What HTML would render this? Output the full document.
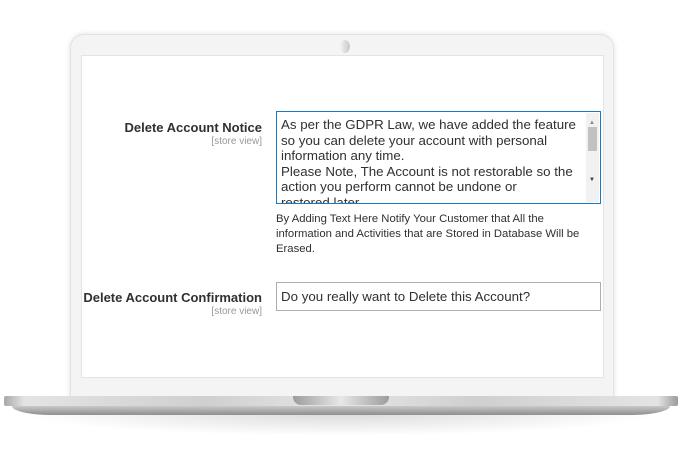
<!DOCTYPE html>
<html><head><style>
*{margin:0;padding:0;box-sizing:border-box}
body{width:680px;height:450px;background:#fff;position:relative;overflow:hidden;font-family:"Liberation Sans",sans-serif;color:#303030}
.lid{position:absolute;left:70px;top:34px;width:544px;height:366px;background:#f4f4f4;border-radius:14px 14px 0 0;box-shadow:0 0 6px rgba(0,0,0,.12);border:1px solid #e2e2e2}
.cam{position:absolute;left:340px;top:40px;width:10px;height:13px;border-radius:50%;background:linear-gradient(90deg,#f2f2f2,#c8c8c8)}
.screen{position:absolute;left:81px;top:55px;width:523px;height:323px;background:#fff;border:1px solid #e4e4e4}
.base{position:absolute;left:4px;top:396px;width:674px;height:10px;background:linear-gradient(90deg,#a8a8a8,#e4e4e4 3%,#cfcfcf 30%,#e6e6e6 50%,#cfcfcf 70%,#e4e4e4 97%,#9a9a9a);border-radius:2px}
.base2{position:absolute;left:12px;top:406px;width:658px;height:9px;background:linear-gradient(#c9c9c9,#8e8e8e);border-radius:0 0 40px 40px/0 0 9px 9px}
.shadow{position:absolute;left:20px;top:414px;width:640px;height:22px;background:radial-gradient(ellipse at 50% 0,rgba(0,0,0,.14),rgba(0,0,0,0) 70%)}
.notch{position:absolute;left:293px;top:396px;width:96px;height:9px;background:linear-gradient(90deg,#9c9c9c,#e8e8e8 50%,#9c9c9c);border-radius:0 0 8px 8px}
.lbl{position:absolute;right:418px;text-align:right;font-weight:bold;font-size:13px;color:#303030;white-space:nowrap}
.sv{position:absolute;right:418px;text-align:right;font-size:10px;color:#999;white-space:nowrap}
.ta{position:absolute;left:276px;top:111px;width:325px;height:93px;border:1px solid #1979c3;overflow:hidden;font-size:13.3px;line-height:15.6px;padding:5px 0 0 4px;white-space:nowrap;color:#303030}
.sb{position:absolute;right:1px;top:1px;width:13px;height:89px;background:#f1f1f1}
.th{position:absolute;left:2px;top:14px;width:9px;height:24px;background:#c1c1c1}
.note{position:absolute;left:276px;top:212px;font-size:11.3px;line-height:15px;white-space:nowrap;color:#303030}
.inp{position:absolute;left:276px;top:282px;width:325px;height:29px;border:1px solid #adadad;font-size:13.3px;padding:6px 0 0 4px;white-space:nowrap}
</style></head><body>
<div class="shadow"></div>
<div class="lid"></div>
<div class="cam"></div>
<div class="screen"></div>
<div class="base"></div><div class="base2"></div><div class="notch"></div>

<div class="lbl" style="top:120px">Delete Account Notice</div>
<div class="sv" style="top:136px">[store view]</div>
<div class="ta">As per the GDPR Law, we have added the feature<br>so you can delete your account with personal<br>information any time.<br>Please Note, The Account is not restorable so the<br>action you perform cannot be undone or<br>restored later.
<div class="sb"><div style="position:absolute;left:3px;top:3px;font-size:6px;color:#888">▲</div><div class="th"></div><div style="position:absolute;left:3px;top:60px;font-size:6px;color:#333">▼</div></div></div>
<div class="note">By Adding Text Here Notify Your Customer that All the<br>information and Activities that are Stored in Database Will be<br>Erased.</div>
<div class="lbl" style="top:290px">Delete Account Confirmation</div>
<div class="sv" style="top:306px">[store view]</div>
<div class="inp">Do you really want to Delete this Account?</div>
</body></html>
